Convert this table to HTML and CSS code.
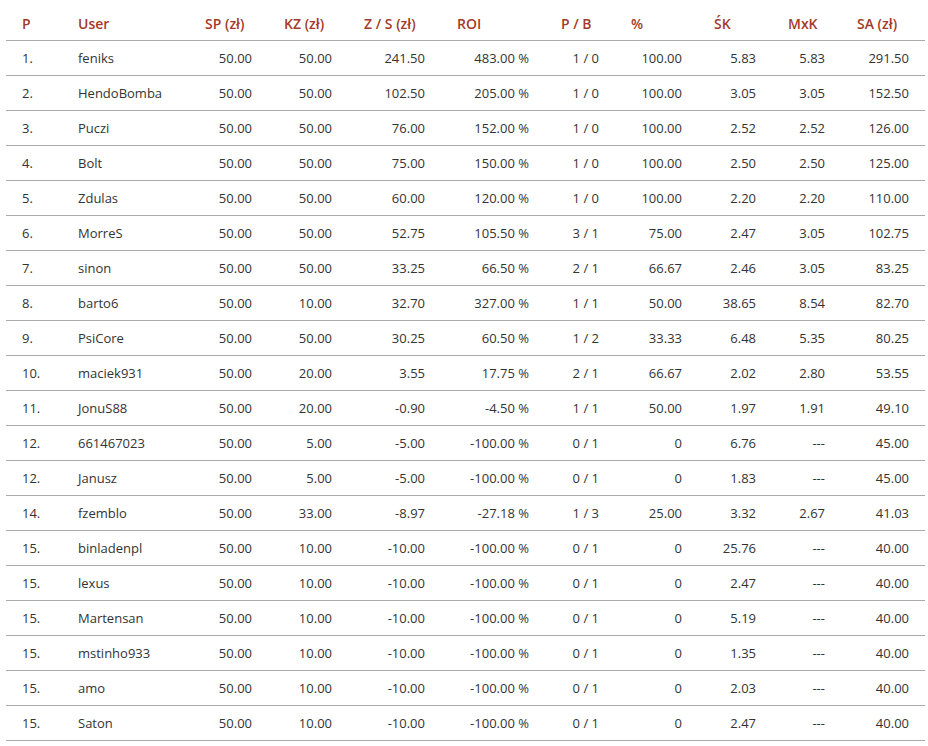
FILE: index.html
```html
<!DOCTYPE html>
<html lang="pl">
<head>
<meta charset="utf-8">
<title>Ranking</title>
<link rel="stylesheet" href="styles.css">
</head>
<body>
<table class="ranking">
  <colgroup>
    <col class="c-p"><col class="c-user"><col class="c-sp"><col class="c-kz"><col class="c-zs"><col class="c-roi"><col class="c-pb"><col class="c-pct"><col class="c-sk"><col class="c-mxk"><col class="c-sa">
  </colgroup>
  <thead>
    <tr><th>P</th><th>User</th><th>SP (zł)</th><th>KZ (zł)</th><th>Z / S (zł)</th><th>ROI</th><th>P / B</th><th>%</th><th>ŚK</th><th>MxK</th><th>SA (zł)</th></tr>
  </thead>
  <tbody>
    <tr><td>1.</td><td>feniks</td><td>50.00</td><td>50.00</td><td>241.50</td><td>483.00 %</td><td>1 / 0</td><td>100.00</td><td>5.83</td><td>5.83</td><td>291.50</td></tr>
    <tr><td>2.</td><td>HendoBomba</td><td>50.00</td><td>50.00</td><td>102.50</td><td>205.00 %</td><td>1 / 0</td><td>100.00</td><td>3.05</td><td>3.05</td><td>152.50</td></tr>
    <tr><td>3.</td><td>Puczi</td><td>50.00</td><td>50.00</td><td>76.00</td><td>152.00 %</td><td>1 / 0</td><td>100.00</td><td>2.52</td><td>2.52</td><td>126.00</td></tr>
    <tr><td>4.</td><td>Bolt</td><td>50.00</td><td>50.00</td><td>75.00</td><td>150.00 %</td><td>1 / 0</td><td>100.00</td><td>2.50</td><td>2.50</td><td>125.00</td></tr>
    <tr><td>5.</td><td>Zdulas</td><td>50.00</td><td>50.00</td><td>60.00</td><td>120.00 %</td><td>1 / 0</td><td>100.00</td><td>2.20</td><td>2.20</td><td>110.00</td></tr>
    <tr><td>6.</td><td>MorreS</td><td>50.00</td><td>50.00</td><td>52.75</td><td>105.50 %</td><td>3 / 1</td><td>75.00</td><td>2.47</td><td>3.05</td><td>102.75</td></tr>
    <tr><td>7.</td><td>sinon</td><td>50.00</td><td>50.00</td><td>33.25</td><td>66.50 %</td><td>2 / 1</td><td>66.67</td><td>2.46</td><td>3.05</td><td>83.25</td></tr>
    <tr><td>8.</td><td>barto6</td><td>50.00</td><td>10.00</td><td>32.70</td><td>327.00 %</td><td>1 / 1</td><td>50.00</td><td>38.65</td><td>8.54</td><td>82.70</td></tr>
    <tr><td>9.</td><td>PsiCore</td><td>50.00</td><td>50.00</td><td>30.25</td><td>60.50 %</td><td>1 / 2</td><td>33.33</td><td>6.48</td><td>5.35</td><td>80.25</td></tr>
    <tr><td>10.</td><td>maciek931</td><td>50.00</td><td>20.00</td><td>3.55</td><td>17.75 %</td><td>2 / 1</td><td>66.67</td><td>2.02</td><td>2.80</td><td>53.55</td></tr>
    <tr><td>11.</td><td>JonuS88</td><td>50.00</td><td>20.00</td><td>-0.90</td><td>-4.50 %</td><td>1 / 1</td><td>50.00</td><td>1.97</td><td>1.91</td><td>49.10</td></tr>
    <tr><td>12.</td><td>661467023</td><td>50.00</td><td>5.00</td><td>-5.00</td><td>-100.00 %</td><td>0 / 1</td><td>0</td><td>6.76</td><td>---</td><td>45.00</td></tr>
    <tr><td>12.</td><td>Janusz</td><td>50.00</td><td>5.00</td><td>-5.00</td><td>-100.00 %</td><td>0 / 1</td><td>0</td><td>1.83</td><td>---</td><td>45.00</td></tr>
    <tr><td>14.</td><td>fzemblo</td><td>50.00</td><td>33.00</td><td>-8.97</td><td>-27.18 %</td><td>1 / 3</td><td>25.00</td><td>3.32</td><td>2.67</td><td>41.03</td></tr>
    <tr><td>15.</td><td>binladenpl</td><td>50.00</td><td>10.00</td><td>-10.00</td><td>-100.00 %</td><td>0 / 1</td><td>0</td><td>25.76</td><td>---</td><td>40.00</td></tr>
    <tr><td>15.</td><td>lexus</td><td>50.00</td><td>10.00</td><td>-10.00</td><td>-100.00 %</td><td>0 / 1</td><td>0</td><td>2.47</td><td>---</td><td>40.00</td></tr>
    <tr><td>15.</td><td>Martensan</td><td>50.00</td><td>10.00</td><td>-10.00</td><td>-100.00 %</td><td>0 / 1</td><td>0</td><td>5.19</td><td>---</td><td>40.00</td></tr>
    <tr><td>15.</td><td>mstinho933</td><td>50.00</td><td>10.00</td><td>-10.00</td><td>-100.00 %</td><td>0 / 1</td><td>0</td><td>1.35</td><td>---</td><td>40.00</td></tr>
    <tr><td>15.</td><td>amo</td><td>50.00</td><td>10.00</td><td>-10.00</td><td>-100.00 %</td><td>0 / 1</td><td>0</td><td>2.03</td><td>---</td><td>40.00</td></tr>
    <tr><td>15.</td><td>Saton</td><td>50.00</td><td>10.00</td><td>-10.00</td><td>-100.00 %</td><td>0 / 1</td><td>0</td><td>2.47</td><td>---</td><td>40.00</td></tr>
  </tbody>
</table>
</body>
</html>
```
FILE: styles.css
```css
html, body {
  margin: 0;
  padding: 0;
  background: #ffffff;
}

body {
  padding: 6px 0 0 6px;
  font-family: "Open Sans", "Noto Sans", sans-serif;
  font-size: 13px;
  color: #333333;
}

.ranking {
  width: 919px;
  table-layout: fixed;
  border-collapse: collapse;
}

.c-p { width: 56px; }
.c-user { width: 127px; }
.c-sp { width: 79px; }
.c-kz { width: 80px; }
.c-zs { width: 93px; }
.c-roi { width: 104px; }
.c-pb { width: 70px; }
.c-pct { width: 83px; }
.c-sk { width: 74px; }
.c-mxk { width: 69px; }
.c-sa { width: 84px; }

.ranking th,
.ranking td {
  height: 34px;
  padding: 0 16px;
  line-height: 18px;
  border-bottom: 1px solid #aaaaaa;
  white-space: nowrap;
  vertical-align: middle;
}

.ranking th {
  height: 33px;
  padding-top: 1px;
  text-align: left;
  font-size: 14px;
  font-weight: 600;
  color: #a33a2b;
}

.ranking td {
  text-align: right;
}

.ranking td:nth-child(1),
.ranking td:nth-child(2) {
  text-align: left;
}
```
